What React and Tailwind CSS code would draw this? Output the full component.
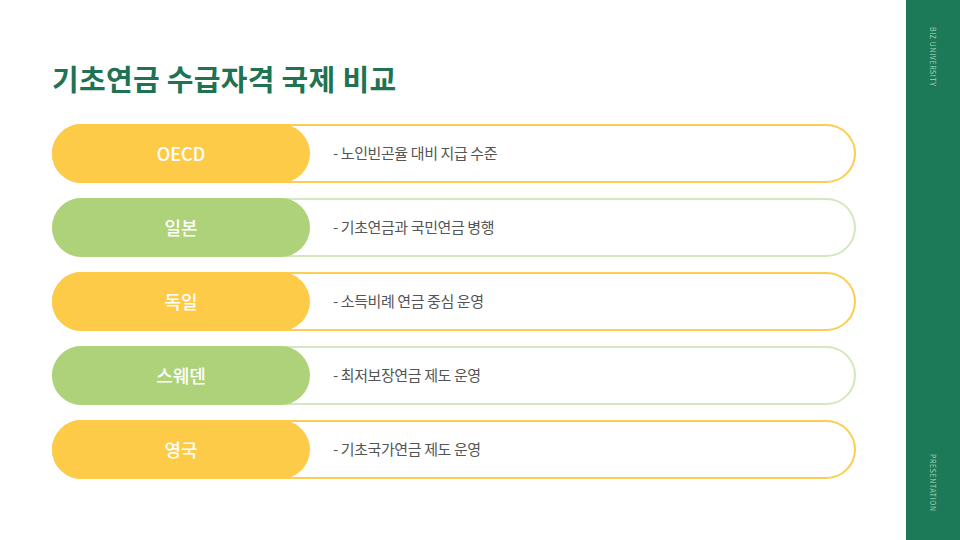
const rows = [
  { label: "OECD", desc: "- 노인빈곤율 대비 지급 수준", tone: "yellow" },
  { label: "일본", desc: "- 기초연금과 국민연금 병행", tone: "green" },
  { label: "독일", desc: "- 소득비례 연금 중심 운영", tone: "yellow" },
  { label: "스웨덴", desc: "- 최저보장연금 제도 운영", tone: "green" },
  { label: "영국", desc: "- 기초국가연금 제도 운영", tone: "yellow" },
];

const font = {
  fontFamily: '"Noto Sans CJK KR", "Noto Sans", sans-serif',
};

function Row({ label, desc, tone }) {
  const isYellow = tone === "yellow";
  return (
    <div
      className={`flex items-center w-[804px] h-[59px] border-2 rounded-full bg-white ${
        isYellow ? "border-[#fbcd52]" : "border-[#d4e7be]"
      }`}
    >
      <div
        className={`-ml-[2px] -my-[2px] h-[59px] w-[258px] shrink-0 rounded-full flex items-center justify-center text-white text-[18px] font-medium ${
          isYellow ? "bg-[#fecb48]" : "bg-[#aed27a]"
        }`}
      >
        {label}
      </div>
      <div className="ml-[23px] text-[15px] text-[#555555] tracking-[-0.4px] whitespace-pre">
        {desc}
      </div>
    </div>
  );
}

export default function App() {
  return (
    <div className="w-[960px] h-[540px] flex bg-white overflow-hidden" style={font}>
      <main className="flex-1 pl-[52px] pt-[58px]">
        <h1 className="text-[29px] leading-[40px] font-bold text-[#1f7352] tracking-[0.3px]">
          기초연금 수급자격 국제 비교
        </h1>
        <div className="mt-[26px] flex flex-col gap-[15px]">
          {rows.map((r) => (
            <Row key={r.label} {...r} />
          ))}
        </div>
      </main>
      <aside className="w-[54px] h-full bg-[#1d7a58] flex flex-col items-center justify-between pt-[27px] pb-[28px]">
        <span
          className="text-[7px] tracking-[0.6px] text-[#a0d8bc]"
          style={{ writingMode: "vertical-rl" }}
        >
          BIZ UNIVERSITY
        </span>
        <span
          className="text-[7px] tracking-[0.6px] text-[#a0d8bc]"
          style={{ writingMode: "vertical-rl" }}
        >
          PRESENTATION
        </span>
      </aside>
    </div>
  );
}
